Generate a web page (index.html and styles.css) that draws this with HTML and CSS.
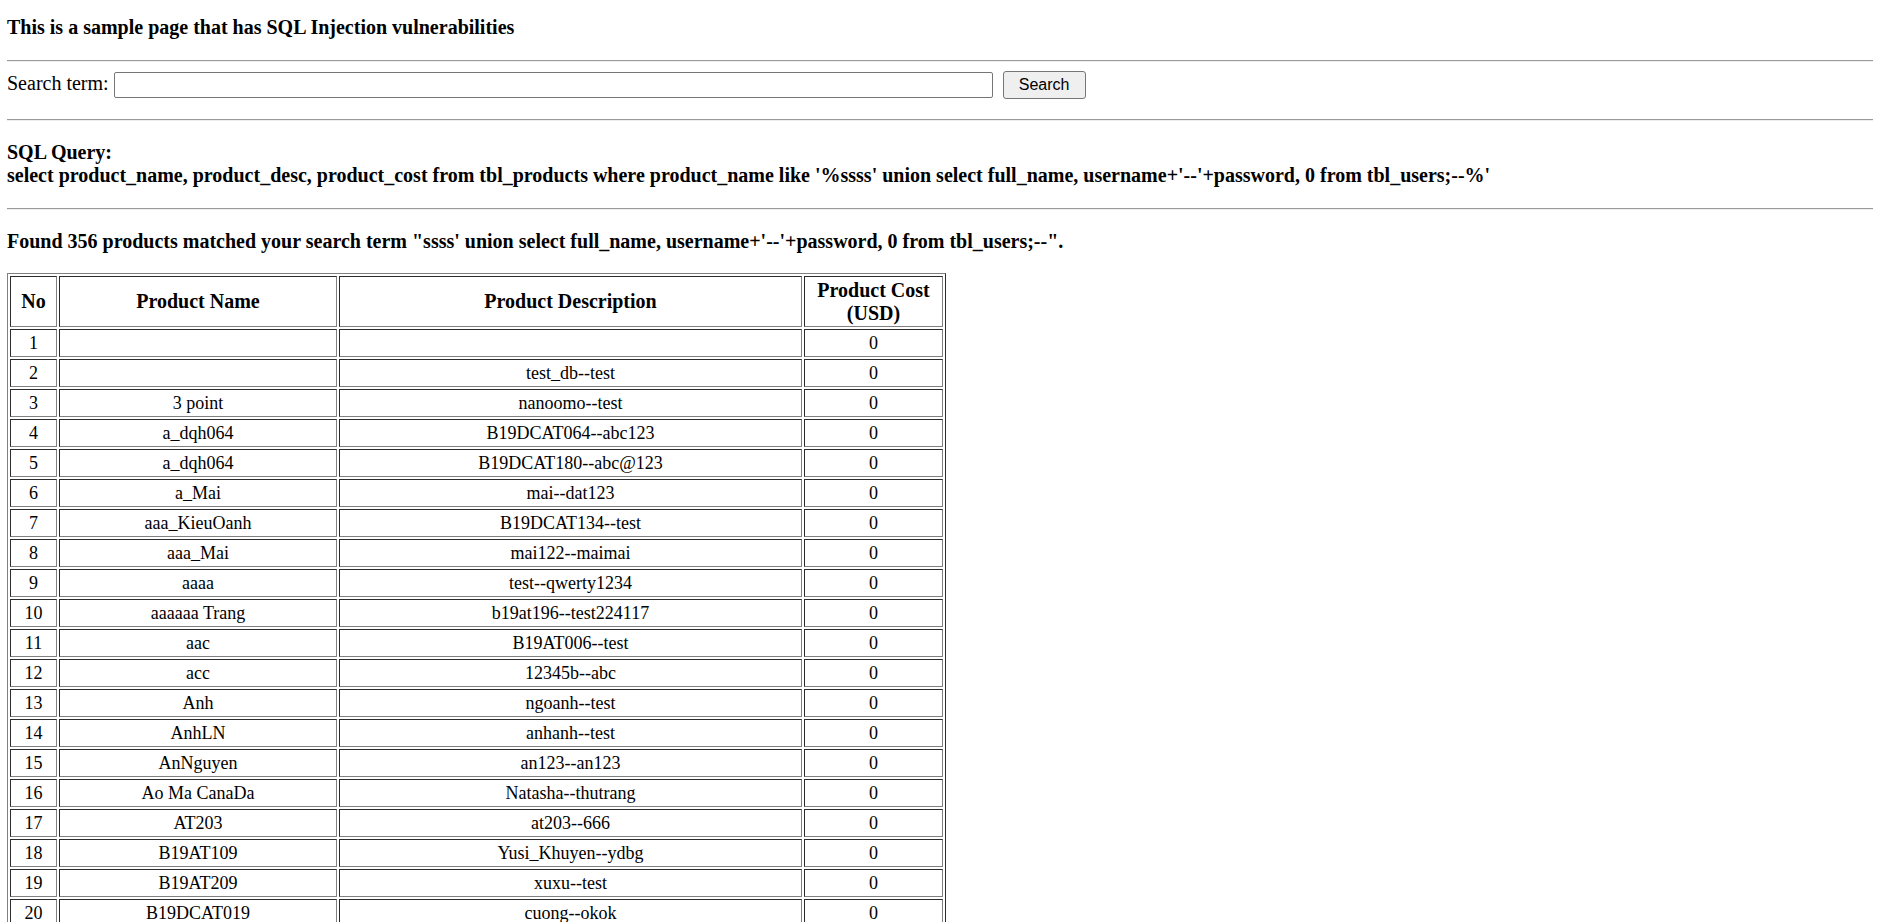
FILE: index.html
```html
<!DOCTYPE html>
<html>
<head>
<meta charset="utf-8">
<title>SQL Injection sample</title>
<link rel="stylesheet" href="styles.css">
</head>
<body class="page">
<h4 class="heading heading-title">This is a sample page that has SQL Injection vulnerabilities</h4>
<hr class="rule">
<form class="search-form">
  <label class="search-label">Search term:</label>
  <input class="search-input" type="text" name="term">
  <button class="search-btn" type="submit">Search</button>
</form>
<hr class="rule">
<h4 class="heading">SQL Query:<br>select product_name, product_desc, product_cost from tbl_products where product_name like '%ssss' union select full_name, username+'--'+password, 0 from tbl_users;--%'</h4>
<hr class="rule">
<h4 class="heading heading-found">Found 356 products matched your search term "ssss' union select full_name, username+'--'+password, 0 from tbl_users;--".</h4>
<table class="products">
  <colgroup>
    <col class="c-no"><col class="c-name"><col class="c-desc"><col class="c-cost">
  </colgroup>
  <tr><th>No</th><th>Product Name</th><th>Product Description</th><th>Product Cost<br>(USD)</th></tr>
  <tr><td>1</td><td></td><td></td><td>0</td></tr>
  <tr><td>2</td><td></td><td>test_db--test</td><td>0</td></tr>
  <tr><td>3</td><td>3 point</td><td>nanoomo--test</td><td>0</td></tr>
  <tr><td>4</td><td>a_dqh064</td><td>B19DCAT064--abc123</td><td>0</td></tr>
  <tr><td>5</td><td>a_dqh064</td><td>B19DCAT180--abc@123</td><td>0</td></tr>
  <tr><td>6</td><td>a_Mai</td><td>mai--dat123</td><td>0</td></tr>
  <tr><td>7</td><td>aaa_KieuOanh</td><td>B19DCAT134--test</td><td>0</td></tr>
  <tr><td>8</td><td>aaa_Mai</td><td>mai122--maimai</td><td>0</td></tr>
  <tr><td>9</td><td>aaaa</td><td>test--qwerty1234</td><td>0</td></tr>
  <tr><td>10</td><td>aaaaaa Trang</td><td>b19at196--test224117</td><td>0</td></tr>
  <tr><td>11</td><td>aac</td><td>B19AT006--test</td><td>0</td></tr>
  <tr><td>12</td><td>acc</td><td>12345b--abc</td><td>0</td></tr>
  <tr><td>13</td><td>Anh</td><td>ngoanh--test</td><td>0</td></tr>
  <tr><td>14</td><td>AnhLN</td><td>anhanh--test</td><td>0</td></tr>
  <tr><td>15</td><td>AnNguyen</td><td>an123--an123</td><td>0</td></tr>
  <tr><td>16</td><td>Ao Ma CanaDa</td><td>Natasha--thutrang</td><td>0</td></tr>
  <tr><td>17</td><td>AT203</td><td>at203--666</td><td>0</td></tr>
  <tr><td>18</td><td>B19AT109</td><td>Yusi_Khuyen--ydbg</td><td>0</td></tr>
  <tr><td>19</td><td>B19AT209</td><td>xuxu--test</td><td>0</td></tr>
  <tr><td>20</td><td>B19DCAT019</td><td>cuong--okok</td><td>0</td></tr>
  <tr><td>21</td><td>B19DCAT020</td><td>test--test</td><td>0</td></tr>
  <tr><td>22</td><td>B19DCAT021</td><td>test--test</td><td>0</td></tr>
</table>
</body>
</html>
```

FILE: styles.css
```css
.page {
  margin: 0;
  padding: 0 7px;
  font-family: "Liberation Serif", "Times New Roman", serif;
  font-size: 20px;
  color: #000;
  background: #fff;
}
.heading {
  font-size: 20px;
  font-weight: bold;
  line-height: 23px;
  margin: 20px 0 21px;
}
.heading-title {
  margin-top: 16px;
}
.heading-found {
  margin-bottom: 20px;
}
.rule {
  margin: 0;
  border: 0;
  border-top: 1px solid #9a9a9a;
  border-bottom: 1px solid #eeeeee;
  height: 0;
}
.search-form {
  display: flex;
  align-items: center;
  gap: 5px;
  margin: 0;
  padding: 9px 0 20px;
}
.search-label {
  align-self: flex-start;
  margin-top: 1px;
  line-height: 23px;
}
.search-input {
  width: 879px;
  height: 26px;
  box-sizing: border-box;
  border: 1px solid #767676;
  border-radius: 2px;
  padding: 1px 2px;
  margin: 0;
  font-size: 16px;
}
.search-btn {
  margin: 0 0 0 5px;
  width: 83px;
  height: 28px;
  box-sizing: border-box;
  font-family: "Liberation Sans", Arial, sans-serif;
  font-size: 16px;
  color: #000;
  background: #efefef;
  border: 1px solid #767676;
  border-radius: 3px;
  padding: 0;
}
.products {
  border: 1px outset grey;
  border-spacing: 2px;
  width: 939px;
  table-layout: fixed;
}
.products th,
.products td {
  border: 1px inset grey;
  text-align: center;
  vertical-align: middle;
  padding: 1.5px;
  line-height: 23px;
}
.products th {
  font-size: 20px;
  font-weight: bold;
}
.products td {
  font-size: 18px;
}
.c-no { width: 47px; }
.c-name { width: 278px; }
.c-desc { width: 463px; }
.c-cost { width: 139px; }
```
